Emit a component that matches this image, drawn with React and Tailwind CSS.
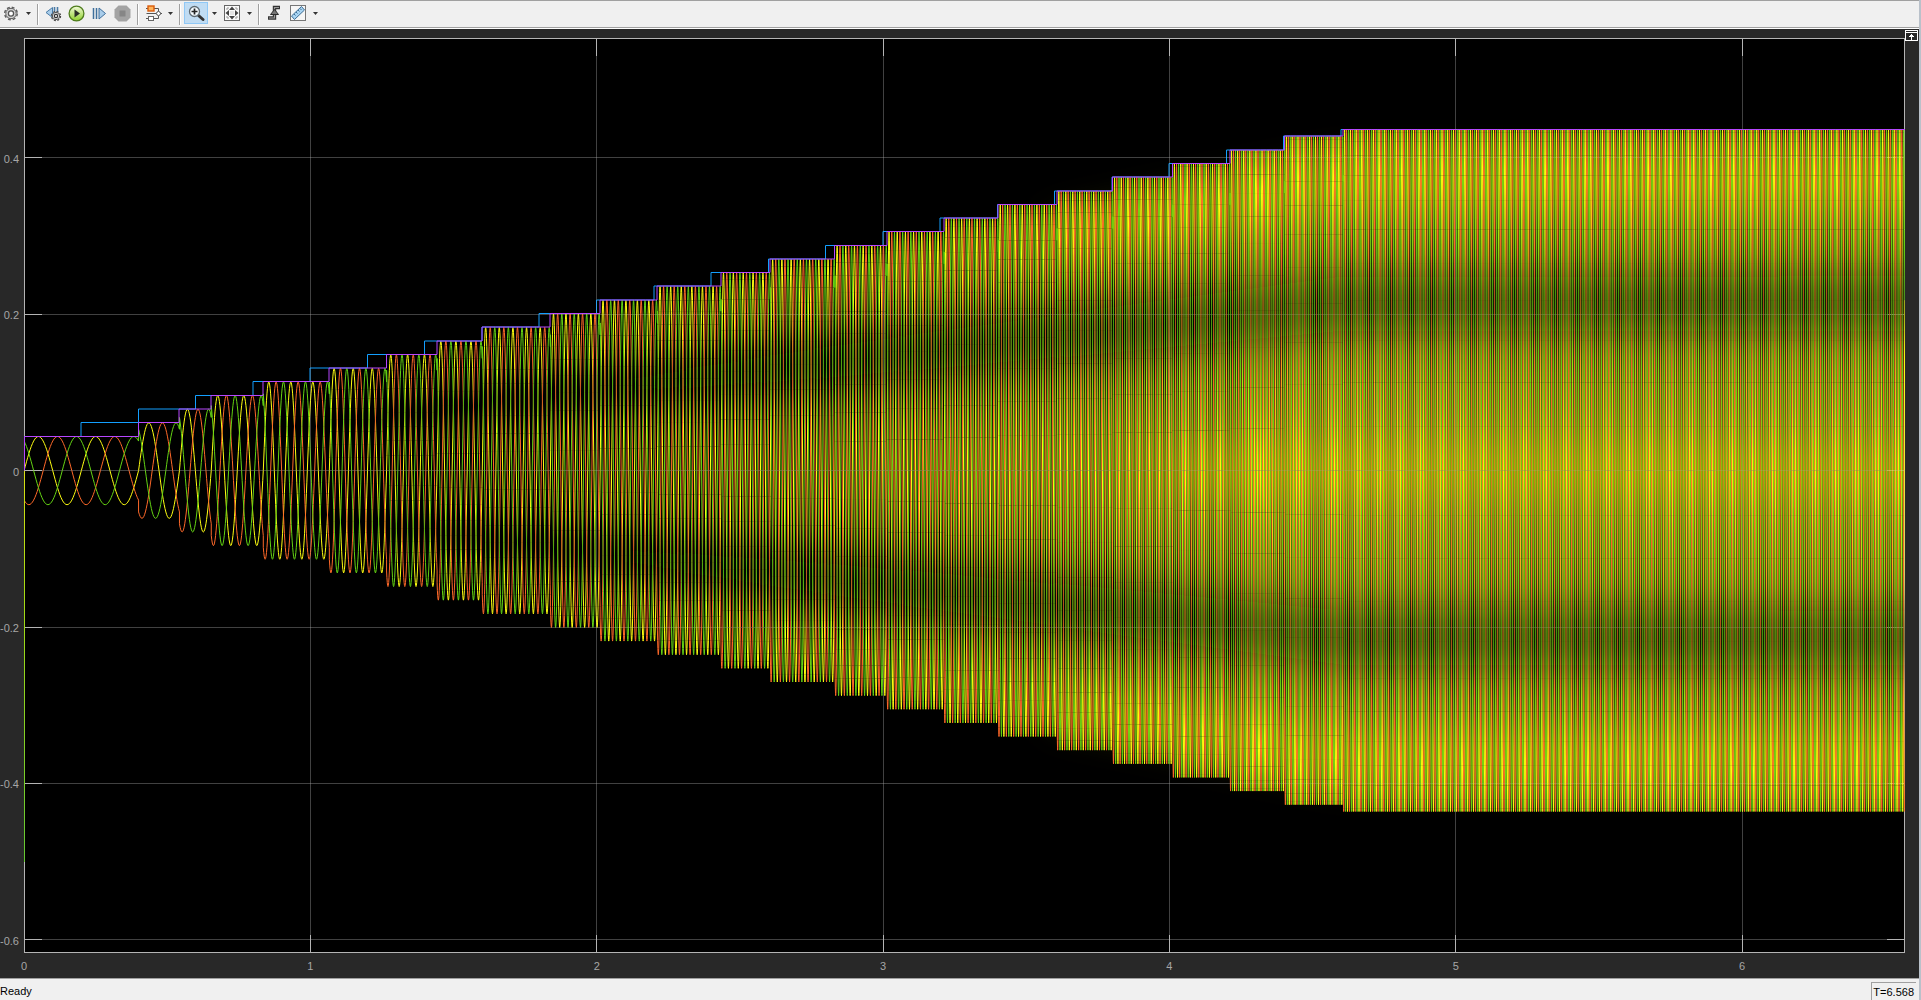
import React, { useMemo } from "react";

const T_END = 6.568;
const W = 1881;
const H = 915;
const PX_T = 286.33;
const ZERO = 432.6;
const PX_Y = 782;
const AMP = 0.00872;
const DRIFT = 0.9995;

const half = (n) => Math.floor(n * 2) / 2;
const pixel = (n) => Math.floor(n) + 0.5;
const rawX = (t) => 0.1 + t * PX_T;
const rawY = (v) => ZERO - v * PX_Y;
const sx = (t) => half(rawX(t));
const sy = (v) => half(rawY(v));
const gx = (t) => pixel(rawX(t));
const gy = (v) => pixel(rawY(v));
const point = (t, v) => `${rawX(t).toFixed(2)} ${rawY(v).toFixed(2)}`;
const freqAt = (k) => Math.min(5 + 2 * k, 50);

/* The drive picks up a new amplitude and frequency only when a full cycle ends. */
function buildWaves() {
  const phases = [0, (-2 * Math.PI) / 3, (2 * Math.PI) / 3];
  const strokes = [[], [], []];
  const n = 48;
  let held = `M0.5 ${sy(0)}`;
  let t = 0;
  while (t < T_END) {
    const f = freqAt(Math.floor(t / 0.2));
    const period = DRIFT / f;
    const amp = AMP * f;
    const nextAmp = AMP * freqAt(Math.floor((t + period) / 0.2));
    phases.forEach((p, j) => {
      let d = "";
      for (let i = 0; i <= n; i++) {
        const time = t + (i / n) * period;
        if (time > T_END) break;
        d += (d ? "L" : "M") + point(time, amp * Math.sin((2 * Math.PI * i) / n + p));
      }
      if (nextAmp !== amp && t + period < T_END) {
        d += "L" + point(t + period, nextAmp * Math.sin(p));
      }
      strokes[j].push(d);
    });
    held += `V${sy(amp)}H${Math.min(sx(t + period), W)}`;
    t += period;
  }
  let command = `M0.5 ${sy(AMP * 5)}`;
  for (let k = 0; k * 0.2 < T_END; k++) {
    command += `V${sy(AMP * freqAt(k))}H${Math.min(sx((k + 1) * 0.2), W)}`;
  }
  return { strokes, held, command };
}

/* A strip that follows the envelope between two fractions of its height. */
function envelopeBand(from, low, high) {
  const amp = (t) => Math.min(0.0436 + 0.0852 * t, 0.436);
  const corner = 4.6;
  return [
    point(from, amp(from) * low),
    point(corner, amp(corner) * low),
    point(6.7, amp(6.7) * low),
    point(6.7, amp(6.7) * high),
    point(corner, amp(corner) * high),
    point(from, amp(from) * high),
  ].join(" ");
}

const X_TICKS = [0, 1, 2, 3, 4, 5, 6];
const Y_TICKS = [0.4, 0.2, 0, -0.2, -0.4, -0.6];

function Grid({ opacity }) {
  return (
    <g stroke="#b4b4b4" strokeOpacity={opacity} shapeRendering="crispEdges">
      {X_TICKS.slice(1).map((t) => (
        <line key={t} x1={gx(t)} x2={gx(t)} y1="1" y2={H - 1} />
      ))}
      {Y_TICKS.map((v) => (
        <line key={v} x1="1" x2={W - 1} y1={gy(v)} y2={gy(v)} />
      ))}
    </g>
  );
}

function Plot() {
  const { strokes, held, command } = useMemo(buildWaves, []);
  return (
    <svg
      className="block h-full w-full bg-black"
      viewBox={`0 0 ${W} ${H}`}
      preserveAspectRatio="none"
      role="img"
      aria-label="Three-phase signal traces"
    >
      <defs>
        <linearGradient id="startup" gradientUnits="userSpaceOnUse" x1="0" x2="0" y1={ZERO} y2="824">
          <stop offset="0" stopColor="#d8e012" />
          <stop offset="0.3" stopColor="#a8dc12" />
          <stop offset="1" stopColor="#64c832" />
        </linearGradient>
        <filter id="soft" filterUnits="userSpaceOnUse" x="0" y="0" width={W} height={H}>
          <feGaussianBlur stdDeviation="20" />
        </filter>
      </defs>
      <Grid opacity={0.24} />
      <g fill="none" stroke="#b4b4b4" shapeRendering="crispEdges">
        <rect x="0.5" y="0.5" width={W - 1} height={H - 1} />
        {X_TICKS.slice(1).map((t) => (
          <path key={t} d={`M${gx(t)} 0V18M${gx(t)} ${H}V${H - 18}`} />
        ))}
        {Y_TICKS.map((v) => (
          <path key={v} d={`M0 ${gy(v)}H18M${W} ${gy(v)}H${W - 18}`} />
        ))}
      </g>
      <g fill="none" strokeWidth="1" strokeLinejoin="bevel">
        <g stroke="#ffff11">{strokes[0].map((d, i) => <path key={i} d={d} />)}</g>
        <path d={command} stroke="#139fff" />
        <g stroke="#ff6929">{strokes[1].map((d, i) => <path key={i} d={d} />)}</g>
        <g stroke="#64d413">{strokes[2].map((d, i) => <path key={i} d={d} />)}</g>
      </g>
      <g filter="url(#soft)" fill="#001400" fillOpacity="0.42">
        <polygon points={envelopeBand(1.2, 0.41, 0.57)} />
        <polygon points={envelopeBand(1.2, -0.41, -0.57)} />
      </g>
      <g filter="url(#soft)" fill="#ffec10" fillOpacity="0.24">
        <polygon points={envelopeBand(3.6, 0.79, 0.89)} />
        <polygon points={envelopeBand(3.6, -0.79, -0.89)} />
        <polygon points={envelopeBand(4, -0.06, 0.06)} />
      </g>
      <rect x="0" y={ZERO} width="1" height={824 - ZERO} fill="url(#startup)" />
      <path d={held} fill="none" stroke="#b746ff" />
      <Grid opacity={0.16} />
    </svg>
  );
}

function Icon({ children }) {
  return (
    <svg width="17" height="17" viewBox="0 0 17 17" fill="none" aria-hidden="true">
      {children}
    </svg>
  );
}

function Gear() {
  return (
    <Icon>
      <circle cx="8" cy="8.5" r="6.3" stroke="#5c5c5c" strokeWidth="1.4" strokeDasharray="2.9 2.05" />
      <circle cx="8" cy="8.5" r="5.2" fill="#d6d6d6" stroke="#5c5c5c" />
      <circle cx="8" cy="8.5" r="2.6" fill="#fff" stroke="#555" strokeWidth="1.3" />
    </Icon>
  );
}

function StepBackOptions() {
  return (
    <Icon>
      <path d="M7.5 2.5V12.5L1 7.5Z" fill="#a9cdea" stroke="#4a7ba6" />
      <path d="M9.5 2v5M12.5 2v5" stroke="#4a7ba6" strokeWidth="1.6" />
      <circle cx="11" cy="11" r="4.5" stroke="#444" strokeWidth="1.3" strokeDasharray="2 1.53" />
      <circle cx="11" cy="11" r="3.7" fill="#d8d8d8" stroke="#555" />
      <circle cx="11" cy="11" r="1.6" fill="#fff" stroke="#333" strokeWidth="1.2" />
    </Icon>
  );
}

function Run() {
  return (
    <Icon>
      <defs>
        <linearGradient id="run" x1="0" x2="0" y1="0" y2="1">
          <stop offset="0" stopColor="#f2fbd8" />
          <stop offset="1" stopColor="#8fd02c" />
        </linearGradient>
      </defs>
      <circle cx="8.5" cy="8.5" r="7.4" fill="url(#run)" stroke="#4f7d1e" strokeWidth="1.3" />
      <path d="M6.5 4.5v8l5.5-4z" fill="#2b2f26" />
    </Icon>
  );
}

function StepForward() {
  return (
    <Icon>
      <path d="M2.5 3v11M5.5 3v11" stroke="#3f6f9c" strokeWidth="1.5" />
      <path d="M8 3v11l6.5-5.5z" fill="#a9cdea" stroke="#3f6f9c" />
    </Icon>
  );
}

function Stop() {
  return (
    <Icon>
      <path d="M4.5 0.5h8l4 4v8l-4 4h-8l-4-4v-8z" fill="#a3a3a3" />
      <rect x="5.5" y="5.5" width="6" height="6" fill="#868686" />
    </Icon>
  );
}

function Highlight() {
  return (
    <Icon>
      <path d="M1 3.5h2M9 3.5h4.5v3M11 8.5H1.5M13.5 11v2.5H9M1 13.5h2M15 8.5h2" stroke="#555" />
      <rect x="3" y="1" width="6" height="5" fill="#ffb45a" stroke="#d95b0b" strokeWidth="1.4" />
      <circle cx="13.5" cy="8.5" r="2" fill="#fff" stroke="#555" />
      <rect x="3.5" y="11.5" width="5" height="4" fill="#fff" stroke="#666" />
    </Icon>
  );
}

function ZoomIn() {
  return (
    <Icon>
      <path d="M10.5 10.5l4.5 4" stroke="#333" strokeWidth="3" strokeLinecap="round" />
      <circle cx="6.5" cy="6.5" r="5" fill="#f4fbff" stroke="#5f6b73" strokeWidth="1.3" />
      <path d="M6.5 3.5v6M3.5 6.5h6" stroke="#222" strokeWidth="1.7" />
    </Icon>
  );
}

function FitView() {
  return (
    <Icon>
      <rect x="1.5" y="0.5" width="15" height="15" fill="#fafafa" stroke="#666" />
      <path d="M9 1.5l3 3.5H6zM9 14.5l3-3.5H6zM2.5 8L6 5v6zM15.5 8L12 5v6z" fill="#444" />
      <path d="M4 5V3h2M12 3h2v2M14 11v2h-2M6 13H4v-2" stroke="#999" />
      <rect x="7" y="6" width="4" height="4" fill="#e4e4e4" />
    </Icon>
  );
}

function Trigger() {
  return (
    <Icon>
      <path d="M14 2.5H8.5v10.5H2" stroke="#333" strokeWidth="3.4" />
      <path d="M13 2.5H8.5v10.5H3" stroke="#999" strokeWidth="1.2" />
      <path d="M8.5 4.5l4 5h-8z" fill="#777" stroke="#2d2d2d" />
    </Icon>
  );
}

function Measure() {
  return (
    <Icon>
      <rect x="1.5" y="0.5" width="15" height="15" fill="#f6f6f6" stroke="#777" />
      <path d="M12.5 1.5l3 3.5-10 9.5-3-3.5z" fill="#a9d4f2" stroke="#3f6f96" />
      <path d="M5 9l1.5 1.5M7 7l1.5 1.5M9 5l1.5 1.5M11 3.5l1.5 1.5" stroke="#3f6f96" />
    </Icon>
  );
}

function Tool({ label, active, disabled, children }) {
  return (
    <button
      type="button"
      aria-label={label}
      aria-pressed={active}
      disabled={disabled}
      className={
        active
          ? "flex h-[22px] w-6 items-center justify-center border border-[#90c8f6] bg-[#c0dcf3]"
          : "flex h-[22px] w-[23px] items-center justify-center"
      }
    >
      {children}
    </button>
  );
}

function Caret({ label, narrow }) {
  return (
    <button
      type="button"
      aria-label={label}
      className={`flex h-[22px] items-center justify-center ${narrow ? "w-[11px]" : "w-3"}`}
    >
      <svg width="5" height="3" viewBox="0 0 5 3" aria-hidden="true">
        <path d="M0 0h5L2.5 3z" fill="#333" />
      </svg>
    </button>
  );
}

function Separator() {
  return <span className="mx-[3px] mt-[2px] h-[21px] w-[2px] border-l border-[#a0a0a0] bg-white" />;
}

function Toolbar() {
  return (
    <header className="border-b border-white bg-[#f0f0f0]">
      <div role="toolbar" className="flex h-7 items-start border-y border-[#a0a0a0] pt-px">
        <Tool label="Configuration properties"><Gear /></Tool>
        <Caret label="Configuration menu" narrow />
        <Separator />
        <Tool label="Stepping options"><StepBackOptions /></Tool>
        <Tool label="Run"><Run /></Tool>
        <Tool label="Step forward"><StepForward /></Tool>
        <Tool label="Stop" disabled><Stop /></Tool>
        <Separator />
        <Tool label="Highlight block"><Highlight /></Tool>
        <Caret label="Highlight menu" narrow />
        <Separator />
        <Tool label="Zoom" active><ZoomIn /></Tool>
        <Caret label="Zoom menu" />
        <Tool label="Scale axes limits"><FitView /></Tool>
        <Caret label="Scale menu" />
        <Separator />
        <Tool label="Triggers"><Trigger /></Tool>
        <Tool label="Cursor measurements"><Measure /></Tool>
        <Caret label="Measurements menu" />
      </div>
    </header>
  );
}

export default function App() {
  return (
    <div className="flex h-screen bg-[#b9c1ca] pr-[2px] font-['Liberation_Sans',Arial,sans-serif] text-[11px] leading-3">
      <div className="flex min-w-0 flex-1 flex-col">
        <Toolbar />
        <main className="grid min-h-0 flex-1 grid-cols-[24px_minmax(0,1fr)_14px] grid-rows-[minmax(0,1fr)_25px] bg-[#282828] pt-[9px] text-[#a6a6a6]">
          <div className="relative">
            {Y_TICKS.map((v) => (
              <span
                key={v}
                className="absolute right-[5px] -translate-y-1/2 pt-px"
                style={{ top: `${(rawY(v) / H) * 100}%` }}
              >
                {v}
              </span>
            ))}
          </div>
          <Plot />
          <div className="relative">
            <button type="button" aria-label="Maximize axes" className="absolute -top-2 left-0">
              <svg width="13" height="11" viewBox="0 0 13 11" fill="none" stroke="#fff" shapeRendering="crispEdges" aria-hidden="true">
                <rect x="0.5" y="0.5" width="12" height="10" fill="#282828" />
                <path d="M1 2.5h11M6.5 4v6M5 5.5h3M4 6.5h5" />
              </svg>
            </button>
          </div>
          <span />
          <div className="relative">
            {X_TICKS.map((t) => (
              <span
                key={t}
                className="absolute top-[7px] -translate-x-1/2"
                style={{ left: `${(rawX(t) / W) * 100}%` }}
              >
                {t}
              </span>
            ))}
          </div>
        </main>
        <footer className="flex h-[22px] items-end justify-between border-t border-[#a0a0a0] bg-[#f0f0f0] pr-[3px] text-black">
          <span className="flex h-[18px] items-center">Ready</span>
          <span className="flex h-[18px] items-center border-t border-l border-[#a0a0a0] pr-[2px] pl-px">T=6.568</span>
        </footer>
      </div>
    </div>
  );
}
